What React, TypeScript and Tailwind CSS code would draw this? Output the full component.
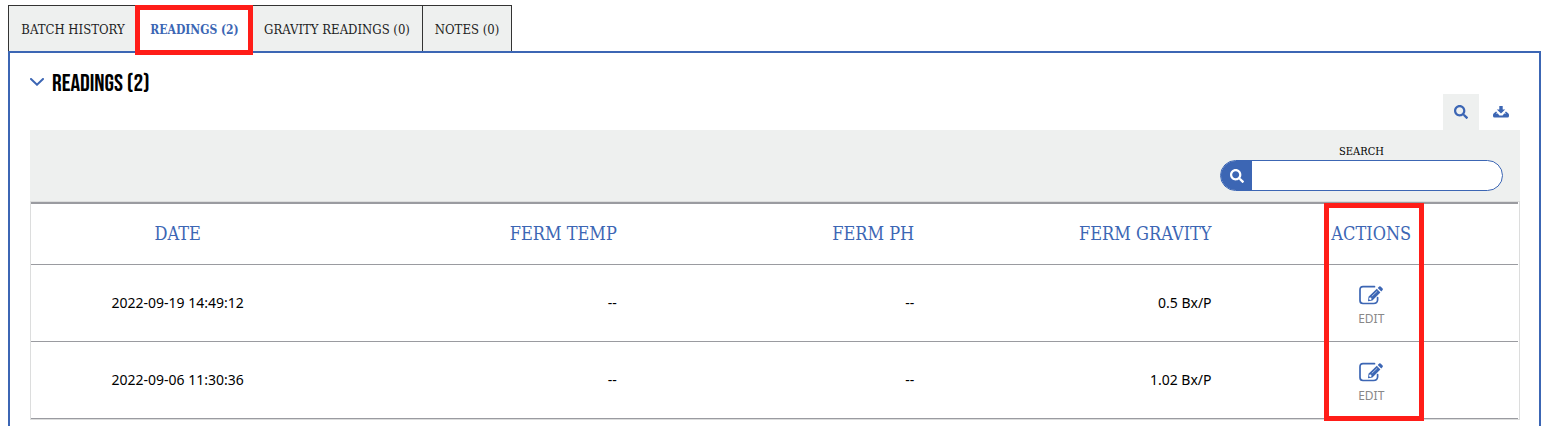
import React from 'react';
import { FaSearch } from 'react-icons/fa';

const slab = "font-['Roboto_Slab','DejaVu_Serif_Condensed','DejaVu_Serif',serif]";

const tabs = [
  { label: 'BATCH HISTORY', width: 'w-[130px]' },
  { label: 'READINGS (2)', width: 'w-[114px]', active: true },
  { label: 'GRAVITY READINGS (0)', width: 'w-[171px]' },
  { label: 'NOTES (0)', width: 'w-[89px]' },
];

const readings = [
  { date: '2022-09-19 14:49:12', temp: '--', ph: '--', gravity: '0.5 Bx/P' },
  { date: '2022-09-06 11:30:36', temp: '--', ph: '--', gravity: '1.02 Bx/P' },
];

const EditIcon = () => (
  <svg viewBox="0 0 24 20" className="w-6 h-5" aria-hidden="true">
    <path
      d="M15.5 1.7H4Q1 1.7 1 4.7V15.5Q1 18.5 4 18.5H14.5Q18.3 18.5 18.6 15V12.5"
      fill="none"
      stroke="currentColor"
      strokeWidth="1.7"
      strokeLinecap="round"
    />
    <path d="M9 16.2L9.5 11.8L17.8 3.8L21.4 7.4L13.4 15.4Z" fill="currentColor" />
    <path d="M18.7 2.9L20.2 1.5Q20.9 0.9 21.6 1.5L23.6 3.5Q24.2 4.2 23.6 4.9L22.3 6.5Z" fill="currentColor" />
    <path d="M12.8 11.3L18.2 6.2" stroke="white" strokeWidth="0.6" />
    <circle cx="11.3" cy="13.8" r="1.2" fill="white" />
  </svg>
);

const DownloadIcon = () => (
  <svg viewBox="0 0 16 12" className="w-4 h-3" fill="currentColor" aria-hidden="true">
    <path d="M6.3 0H9.7V3.6H12.2L8 7.6L3.8 3.6H6.3Z" />
    <path d="M3 5.5L0.6 7.4Q0 8 0 9V10Q0 11.6 1.6 11.6H14.4Q16 11.6 16 10V9Q16 8 15.4 7.4L13 5.5L11.8 6.3L13.2 7.6H11.2L9.6 9.4H6.4L4.8 7.6H2.8L4.2 6.3Z" />
  </svg>
);

const Tabs = () => (
  <div role="tablist" className="flex items-end">
    {tabs.map((tab, i) => (
      <button
        key={tab.label}
        type="button"
        role="tab"
        aria-selected={!!tab.active}
        className={`relative h-[46px] pt-0.5 shrink-0 border-t border-r border-[#333] whitespace-nowrap ${slab} ${tab.width} ${
          i === 0 ? 'border-l' : ''
        } ${tab.active ? 'bg-white text-[#3c66b4] text-xs font-bold' : 'bg-[#eef0ef] text-[#222] text-[13px]'}`}
      >
        {tab.label}
        {tab.active && <span className="absolute z-10 -top-px -bottom-1 -left-[3px] -right-[2px] border-5 border-[#ff1d18]"></span>}
      </button>
    ))}
  </div>
);

const ReadingsTable = () => (
  <div className="relative border border-[#dcdddd] pr-px">
    <table className="w-full table-fixed border-collapse text-sm text-black">
      <thead>
        <tr className={`h-[61px] border-t-2 border-b border-t-[#9a9ba0] border-b-[#9a9ba0] text-lg text-[#3c66b4] ${slab}`}>
          <th className="font-normal pr-1">DATE</th>
          <th className="font-normal text-right pr-[9px]">FERM TEMP</th>
          <th className="font-normal text-right pr-[9px]">FERM PH</th>
          <th className="font-normal text-right pr-[9px]">FERM GRAVITY</th>
          <th className="font-normal pl-1">ACTIONS</th>
        </tr>
      </thead>
      <tbody>
        {readings.map((row) => (
          <tr key={row.date} className="h-[77px] border-b border-[#9a9ba0]">
            <td className="text-center pr-1">{row.date}</td>
            <td className="text-right pr-[9px]">{row.temp}</td>
            <td className="text-right pr-[9px]">{row.ph}</td>
            <td className="text-right pr-[9px]">{row.gravity}</td>
            <td className="pl-1 pt-1.5">
              <button type="button" className="mx-auto flex flex-col items-center gap-1.5 text-[#3c66b4]">
                <EditIcon />
                <span className="text-xs text-[#888]">EDIT</span>
              </button>
            </td>
          </tr>
        ))}
      </tbody>
    </table>
    {/* Highlight around the actions column */}
    <div className="pointer-events-none absolute top-px -bottom-0.5 right-0 w-1/5 pl-2 flex justify-center">
      <div className="w-[100px] border-5 border-[#ff1d18]"></div>
    </div>
  </div>
);

export default function App() {
  return (
    <div className="px-2 pt-[5px] bg-white font-['Noto_Sans','Open_Sans',sans-serif]">
      <Tabs />
      <section className="mr-px border-2 border-b-0 border-[#3c66b4] pl-5 pr-[19px] pt-[17px] pb-5">
        <h2 className="flex items-center gap-2 h-6 text-2xl leading-6 font-normal text-black font-['Bebas_Neue','Liberation_Sans_Narrow','Liberation_Sans',sans-serif]">
          <svg viewBox="0 0 14 8" className="w-3.5 h-2" aria-hidden="true">
            <path d="M1 1L7 6.7L13 1" fill="none" stroke="#3c66b4" strokeWidth="2" strokeLinecap="round" />
          </svg>
          <span className="pt-1">READINGS (2)</span>
        </h2>
        <div className="flex justify-end pr-[5px] text-[#3c66b4]">
          <button type="button" aria-label="Show search" className="size-9 flex items-center justify-center bg-[#eef0ef]">
            <FaSearch className="size-3.5" />
          </button>
          <button type="button" aria-label="Download" className="size-9 pl-2 flex items-center justify-center">
            <DownloadIcon />
          </button>
        </div>
        <div className="flex justify-end h-[71px] bg-[#eef0ef] pt-3 pr-[17px]">
          <div className="w-[283px]">
            <label htmlFor="search" className={`block h-[18px] text-center text-[11px] leading-5 text-black ${slab}`}>
              SEARCH
            </label>
            <div className="flex h-[31px] overflow-hidden rounded-full border border-[#3c66b4] bg-white">
              <span className="w-[31px] flex items-center justify-center bg-[#3c66b4] text-white">
                <FaSearch className="size-3.5" />
              </span>
              <input id="search" type="text" className="flex-1 min-w-0 px-2 text-sm outline-none" />
            </div>
          </div>
        </div>
        <ReadingsTable />
      </section>
    </div>
  );
}
